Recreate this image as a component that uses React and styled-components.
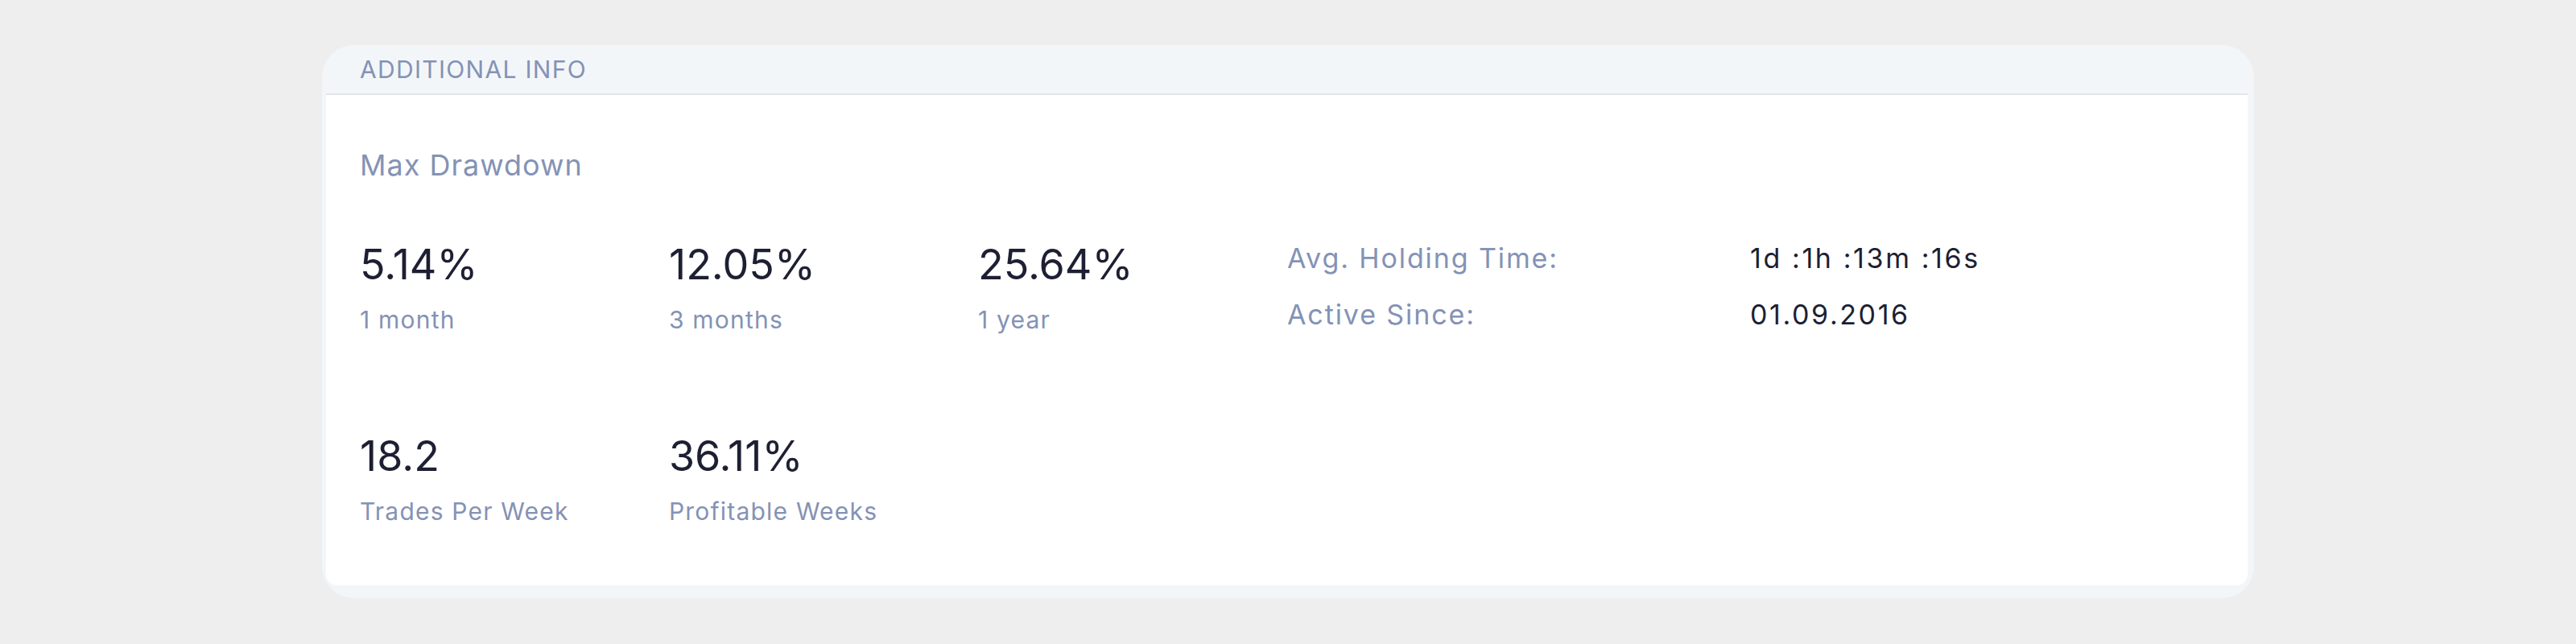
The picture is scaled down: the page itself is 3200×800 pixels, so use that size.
import styled, { createGlobalStyle } from "styled-components";

const GlobalStyle = createGlobalStyle`
  body {
    margin: 0;
    background: #eeeeee;
    font-family: Inter, "Noto Sans", sans-serif;
  }
`;

const maxDrawdown = [
  { value: "5.14%", label: "1 month" },
  { value: "12.05%", label: "3 months" },
  { value: "25.64%", label: "1 year" },
  { value: "18.2", label: "Trades Per Week" },
  { value: "36.11%", label: "Profitable Weeks" },
];

const info = [
  { key: "Avg. Holding Time:", value: "1d :1h :13m :16s" },
  { key: "Active Since:", value: "01.09.2016" },
];

const App = () => {
  return (
    <Page>
      <GlobalStyle />
      <Card>
        <Header>ADDITIONAL INFO</Header>
        <Panel>
          <Title>Max Drawdown</Title>
          <Content>
            <StatsGrid>
              {maxDrawdown.map((s) => (
                <Stat key={s.label}>
                  <Value>{s.value}</Value>
                  <Label>{s.label}</Label>
                </Stat>
              ))}
            </StatsGrid>
            <InfoList>
              {info.map((row) => (
                <InfoRow key={row.key}>
                  <InfoKey>{row.key}</InfoKey>
                  <InfoValue>{row.value}</InfoValue>
                </InfoRow>
              ))}
            </InfoList>
          </Content>
        </Panel>
      </Card>
    </Page>
  );
};

export default App;

const Page = styled.div`
  padding: 56px 0 0 400px;
`;
const Card = styled.div`
  width: 2400px;
  box-sizing: border-box;
  background: #f3f6f9;
  border-radius: 40px;
  padding: 0 8px 16px 5px;
`;
const Header = styled.div`
  height: 60px;
  line-height: 60px;
  padding-left: 42px;
  font-size: 30px;
  color: #8492b5;
  letter-spacing: 1.3px;
`;
const Panel = styled.div`
  background: #ffffff;
  border-top: 2px solid #e2e6ec;
  border-radius: 0 0 14px 14px;
  padding: 67px 42px 75px;
`;
const Title = styled.div`
  font-size: 36px;
  line-height: 40px;
  color: #8492b5;
  letter-spacing: 1px;
  margin-bottom: 74px;
`;
const Content = styled.div`
  display: flex;
  align-items: flex-start;
`;
const StatsGrid = styled.div`
  display: grid;
  grid-template-columns: repeat(3, 384px);
  row-gap: 123px;
`;
const Stat = styled.div`
  display: flex;
  flex-direction: column;
  gap: 21px;
`;
const Value = styled.div`
  font-size: 52px;
  line-height: 60px;
  color: #1d1f33;
`;
const Label = styled.div`
  font-size: 30px;
  line-height: 34px;
  color: #8492b5;
  letter-spacing: 1.2px;
`;
const InfoList = styled.div`
  display: flex;
  flex-direction: column;
  gap: 34px;
  margin-top: 4px;
`;
const InfoRow = styled.div`
  display: grid;
  grid-template-columns: 575px auto;
  font-size: 34px;
  line-height: 36px;
`;
const InfoKey = styled.div`
  color: #8492b5;
  letter-spacing: 1.9px;
`;
const InfoValue = styled.div`
  color: #1d1f33;
  letter-spacing: 2.6px;
`;
